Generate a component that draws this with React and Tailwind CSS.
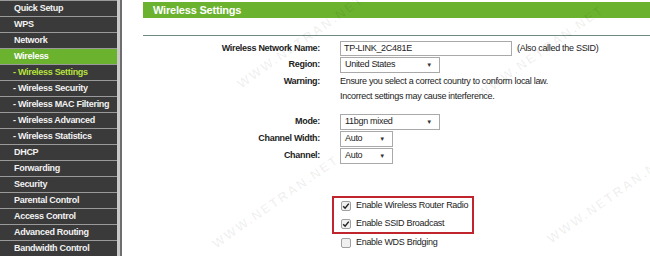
const menu = [
  { label: "Quick Setup" },
  { label: "WPS" },
  { label: "Network" },
  { label: "Wireless", active: true },
  { label: "- Wireless Settings", sub: true, current: true },
  { label: "- Wireless Security", sub: true },
  { label: "- Wireless MAC Filtering", sub: true },
  { label: "- Wireless Advanced", sub: true },
  { label: "- Wireless Statistics", sub: true },
  { label: "DHCP" },
  { label: "Forwarding" },
  { label: "Security" },
  { label: "Parental Control" },
  { label: "Access Control" },
  { label: "Advanced Routing" },
  { label: "Bandwidth Control" },
];

const Select = ({ value, width }) => (
  <div
    className={`flex h-[16px] items-center justify-between border border-[#a9a9a9] bg-white pl-[4px] pr-[7px] ${width}`}
  >
    <span>{value}</span>
    <span className="text-[6px] text-[#333]">▼</span>
  </div>
);

const Check = ({ checked }) => (
  <div className="flex h-[10px] w-[10px] shrink-0 items-center justify-center rounded-[2px] border border-[#a0a0a0] bg-[#f0f0f0]">
    {checked && (
      <svg width="8" height="8" viewBox="0 0 8 8">
        <path d="M1.2 4.2 L3.1 6.2 L6.8 1.6" fill="none" stroke="#222" strokeWidth="1.5" />
      </svg>
    )}
  </div>
);

const Row = ({ label, children, className = "" }) => (
  <div className={`flex ${className}`}>
    <div className="w-[197px] shrink-0 pr-[20px] text-right font-bold">{label}</div>
    <div className="flex-1">{children}</div>
  </div>
);

// watermark spots (left, top of the text before rotating)
const marks = [
  "left-[225px] top-[32px]",
  "left-[465px] top-[42px]",
  "left-[200px] top-[192px]",
  "left-[535px] top-[187px]",
];

export default function App() {
  return (
    <div className="relative flex h-[256px] w-[650px] overflow-hidden bg-white font-['Liberation_Sans',Arial,sans-serif] text-[9px] tracking-[-0.3px] text-[#222]">
      {/* sidebar */}
      <div className="flex w-[117px] shrink-0 flex-col gap-px bg-[#9a9a9a] pt-px">
        {menu.map((m) => (
          <div
            key={m.label}
            className={`flex h-[15px] shrink-0 items-center whitespace-nowrap font-bold ${
              m.active ? "bg-[#6bb22f] text-white" : "bg-[#3a3a3a]"
            } ${m.sub ? "pl-[13px]" : "pl-[14px]"} ${
              m.current ? "text-[#b8e23e]" : m.active ? "" : "text-[#f2f2f2]"
            }`}
          >
            {m.label}
          </div>
        ))}
      </div>
      <div className="w-[3px] shrink-0 bg-[#c9c9c9]" />
      <div className="w-[2px] shrink-0 bg-[#6e6e6e]" />

      {/* content */}
      <div className="flex-1 pl-[21px] pt-[2px]">
        <div className="flex h-[16px] items-center bg-[#6bb22f] pl-[10px] text-[11px] font-bold tracking-[-0.2px] text-white">
          Wireless Settings
        </div>
        <div className="mt-[17px] h-px bg-[#6e8b82]" />

        <div className="mt-[5px] flex flex-col">
          <Row label="Wireless Network Name:" className="items-center">
            <div className="flex items-center">
              <div className="flex h-[15px] w-[172px] items-center border border-[#a9a9a9] pl-[3px]">
                TP-LINK_2C481E
              </div>
              <span className="ml-[5px]">(Also called the SSID)</span>
            </div>
          </Row>
          <Row label="Region:" className="mt-[1px] items-center">
            <Select value="United States" width="w-[100px]" />
          </Row>
          <Row label="Warning:" className="mt-px leading-[15px]">
            <div>Ensure you select a correct country to conform local law.</div>
            <div>Incorrect settings may cause interference.</div>
          </Row>
          <Row label="Mode:" className="mt-[10px] items-center">
            <Select value="11bgn mixed" width="w-[100px]" />
          </Row>
          <Row label="Channel Width:" className="mt-[1px] items-center">
            <Select value="Auto" width="w-[53px]" />
          </Row>
          <Row label="Channel:" className="mt-[1px] items-center">
            <Select value="Auto" width="w-[53px]" />
          </Row>
        </div>

        <div className="ml-[189px] mt-[32px] w-[142px] border-2 border-[#c0242c] pb-[2px] pl-[7px] pt-px">
          {["Enable Wireless Router Radio", "Enable SSID Broadcast"].map((t, i) => (
            <div key={t} className={`flex h-[13px] items-center gap-[5px] ${i ? "mt-[5px]" : ""}`}>
              <Check checked />
              <span>{t}</span>
            </div>
          ))}
        </div>
        <div className="ml-[198px] mt-[2px] flex h-[13px] items-center gap-[5px]">
          <Check />
          <span>Enable WDS Bridging</span>
        </div>
      </div>

      {/* watermark */}
      {marks.map((p) => (
        <div
          key={p}
          className={`pointer-events-none absolute ${p} -rotate-[35deg] whitespace-nowrap text-[13px] font-bold tracking-[2px] text-[#000]/[0.06]`}
        >
          WWW.NETRAN.NET
        </div>
      ))}
    </div>
  );
}
